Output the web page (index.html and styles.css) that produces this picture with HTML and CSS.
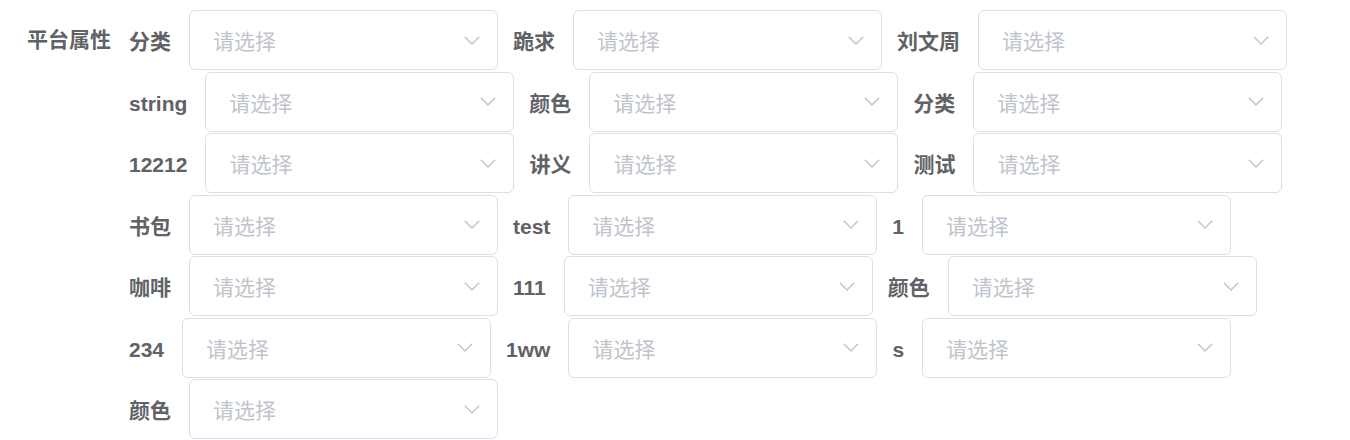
FILE: index.html
```html
<!DOCTYPE html>
<html lang="zh">
<head>
<meta charset="utf-8">
<link rel="stylesheet" href="styles.css">
</head>
<body>
<div class="form">
  <div class="group-label">平台属性</div>
  <div class="items">
    <div class="item"><span class="label">分类</span><div class="select"><span class="ph">请选择</span><svg class="arrow" viewBox="0 0 16 9"><polyline points="0.8,0.8 8,8 15.2,0.8"/></svg></div></div>
    <div class="item"><span class="label">跪求</span><div class="select"><span class="ph">请选择</span><svg class="arrow" viewBox="0 0 16 9"><polyline points="0.8,0.8 8,8 15.2,0.8"/></svg></div></div>
    <div class="item"><span class="label">刘文周</span><div class="select"><span class="ph">请选择</span><svg class="arrow" viewBox="0 0 16 9"><polyline points="0.8,0.8 8,8 15.2,0.8"/></svg></div></div>
    <div class="item"><span class="label">string</span><div class="select"><span class="ph">请选择</span><svg class="arrow" viewBox="0 0 16 9"><polyline points="0.8,0.8 8,8 15.2,0.8"/></svg></div></div>
    <div class="item"><span class="label">颜色</span><div class="select"><span class="ph">请选择</span><svg class="arrow" viewBox="0 0 16 9"><polyline points="0.8,0.8 8,8 15.2,0.8"/></svg></div></div>
    <div class="item"><span class="label">分类</span><div class="select"><span class="ph">请选择</span><svg class="arrow" viewBox="0 0 16 9"><polyline points="0.8,0.8 8,8 15.2,0.8"/></svg></div></div>
    <div class="item"><span class="label">12212</span><div class="select"><span class="ph">请选择</span><svg class="arrow" viewBox="0 0 16 9"><polyline points="0.8,0.8 8,8 15.2,0.8"/></svg></div></div>
    <div class="item"><span class="label">讲义</span><div class="select"><span class="ph">请选择</span><svg class="arrow" viewBox="0 0 16 9"><polyline points="0.8,0.8 8,8 15.2,0.8"/></svg></div></div>
    <div class="item"><span class="label">测试</span><div class="select"><span class="ph">请选择</span><svg class="arrow" viewBox="0 0 16 9"><polyline points="0.8,0.8 8,8 15.2,0.8"/></svg></div></div>
    <div class="item"><span class="label">书包</span><div class="select"><span class="ph">请选择</span><svg class="arrow" viewBox="0 0 16 9"><polyline points="0.8,0.8 8,8 15.2,0.8"/></svg></div></div>
    <div class="item"><span class="label">test</span><div class="select"><span class="ph">请选择</span><svg class="arrow" viewBox="0 0 16 9"><polyline points="0.8,0.8 8,8 15.2,0.8"/></svg></div></div>
    <div class="item"><span class="label">1</span><div class="select"><span class="ph">请选择</span><svg class="arrow" viewBox="0 0 16 9"><polyline points="0.8,0.8 8,8 15.2,0.8"/></svg></div></div>
    <div class="item"><span class="label">咖啡</span><div class="select"><span class="ph">请选择</span><svg class="arrow" viewBox="0 0 16 9"><polyline points="0.8,0.8 8,8 15.2,0.8"/></svg></div></div>
    <div class="item"><span class="label">111</span><div class="select"><span class="ph">请选择</span><svg class="arrow" viewBox="0 0 16 9"><polyline points="0.8,0.8 8,8 15.2,0.8"/></svg></div></div>
    <div class="item"><span class="label">颜色</span><div class="select"><span class="ph">请选择</span><svg class="arrow" viewBox="0 0 16 9"><polyline points="0.8,0.8 8,8 15.2,0.8"/></svg></div></div>
    <div class="item"><span class="label">234</span><div class="select"><span class="ph">请选择</span><svg class="arrow" viewBox="0 0 16 9"><polyline points="0.8,0.8 8,8 15.2,0.8"/></svg></div></div>
    <div class="item"><span class="label">1ww</span><div class="select"><span class="ph">请选择</span><svg class="arrow" viewBox="0 0 16 9"><polyline points="0.8,0.8 8,8 15.2,0.8"/></svg></div></div>
    <div class="item"><span class="label">s</span><div class="select"><span class="ph">请选择</span><svg class="arrow" viewBox="0 0 16 9"><polyline points="0.8,0.8 8,8 15.2,0.8"/></svg></div></div>
    <div class="item"><span class="label">颜色</span><div class="select"><span class="ph">请选择</span><svg class="arrow" viewBox="0 0 16 9"><polyline points="0.8,0.8 8,8 15.2,0.8"/></svg></div></div>
  </div>
</div>
</body>
</html>
```

FILE: styles.css
```css
html, body {
  margin: 0;
  padding: 0;
  background: #ffffff;
}

body {
  font-family: "Liberation Sans", "Noto Sans CJK SC", sans-serif;
  color: #606266;
}

.form {
  display: flex;
  align-items: flex-start;
  padding: 10px 0 0 27px;
}

.group-label {
  font-size: 21px;
  font-weight: bold;
  line-height: 60px;
  margin-right: 18px;
  white-space: nowrap;
}

.items {
  flex: 1;
  display: flex;
  flex-wrap: wrap;
  align-content: flex-start;
}

.item {
  display: flex;
  align-items: center;
  height: 60px;
  margin: 0 15px 1.5px 0;
}

.label {
  font-size: 21px;
  font-weight: bold;
  line-height: 24px;
  padding-top: 4px;
  margin-right: 18px;
  white-space: nowrap;
}

.select {
  box-sizing: border-box;
  width: 309px;
  height: 60px;
  border: 1px solid #dcdfe6;
  border-radius: 6px;
  display: flex;
  align-items: center;
  justify-content: space-between;
  padding: 0 17px 0 23px;
  background: #fff;
}

.ph {
  font-size: 21px;
  color: #c0c4cc;
}

.arrow {
  width: 16px;
  height: 9px;
  fill: none;
  stroke: #c0c4cc;
  stroke-width: 1.4;
}
```
